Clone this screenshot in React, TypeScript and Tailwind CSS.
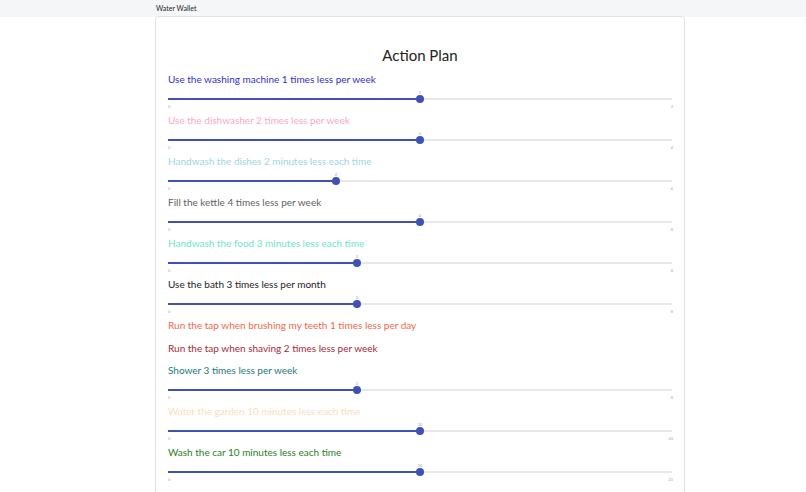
const ROWS: { label: string; color: string; value?: number; max?: number }[] = [
    { label: "Use the washing machine 1 times less per week", color: "text-[#2f2fcf]", value: 1, max: 2 },
    { label: "Use the dishwasher 2 times less per week", color: "text-[#f9a9c2]", value: 2, max: 4 },
    { label: "Handwash the dishes 2 minutes less each time", color: "text-[#9dd6e3]", value: 2, max: 6 },
    { label: "Fill the kettle 4 times less per week", color: "text-[#5f5f5f]", value: 4, max: 8 },
    { label: "Handwash the food 3 minutes less each time", color: "text-[#6ee6c9]", value: 3, max: 8 },
    { label: "Use the bath 3 times less per month", color: "text-[#222222]", value: 3, max: 8 },
    { label: "Run the tap when brushing my teeth 1 times less per day", color: "text-[#f0694b]" },
    { label: "Run the tap when shaving 2 times less per week", color: "text-[#a52a3a]" },
    { label: "Shower 3 times less per week", color: "text-[#1d7b7b]", value: 3, max: 8 },
    { label: "Water the garden 10 minutes less each time", color: "text-[#fddcbc]", value: 10, max: 20 },
    { label: "Wash the car 10 minutes less each time", color: "text-[#2a7f2a]", value: 10, max: 20 },
];

function Slider({ value, max }: { value: number; max: number }) {
    const pct = (value / max) * 100;
    return (
        <div className="flex flex-col pt-[12px]">
            {/* track, with fill / thumb / value label laid over it */}
            <div className="relative h-[2px] bg-[#e8e8e8]">
                <div className="h-full bg-[#3f51b5]" style={{ width: `${pct}%` }} />
                <div
                    className="absolute -top-[3px] w-[8px] h-[8px] -ml-[4px] rounded-full bg-[#3f51b5]"
                    style={{ left: `${pct}%` }}
                />
                <div
                    className="absolute -top-[7px] -translate-x-1/2 text-[4px] leading-[4px] text-[#999]"
                    style={{ left: `${pct}%` }}
                >
                    {value}
                </div>
            </div>
            <div className="flex justify-between pt-[5px] pb-[4px] text-[4px] leading-[4px] text-[#aaa]">
                <span>0</span>
                <span className="-mr-[1px]">{max}</span>
            </div>
        </div>
    );
}

export default function App() {
    return (
        <div className="min-h-[492px] bg-white font-['Lato','Liberation_Sans',sans-serif]">
            <div className="h-[17px] bg-[#f5f6f8] pl-[156px] text-[7px] leading-[17px] text-[#222]">
                Water Wallet
            </div>
            <div className="ml-[155px] w-[530px] -mt-px border border-[#e2e2e2] rounded-t-[3px] bg-white px-[12px] pb-[6px]">
                <h1 className="pt-[28px] pb-[7px] text-center text-[15px] leading-[20px] text-[#222]">Action Plan</h1>
                {ROWS.map((row) => (
                    <div key={row.label} className={row.value === undefined ? "pb-[8.5px]" : ""}>
                        <div className={`text-[10px] leading-[14px] ${row.color}`}>{row.label}</div>
                        {row.value !== undefined && row.max !== undefined && (
                            <Slider value={row.value} max={row.max} />
                        )}
                    </div>
                ))}
                <button className="mt-[16px] h-[21px] w-[59px] rounded-[2px] bg-[#128a7c] text-[8px] font-bold text-white">
                    Calculate
                </button>
            </div>
        </div>
    );
}
